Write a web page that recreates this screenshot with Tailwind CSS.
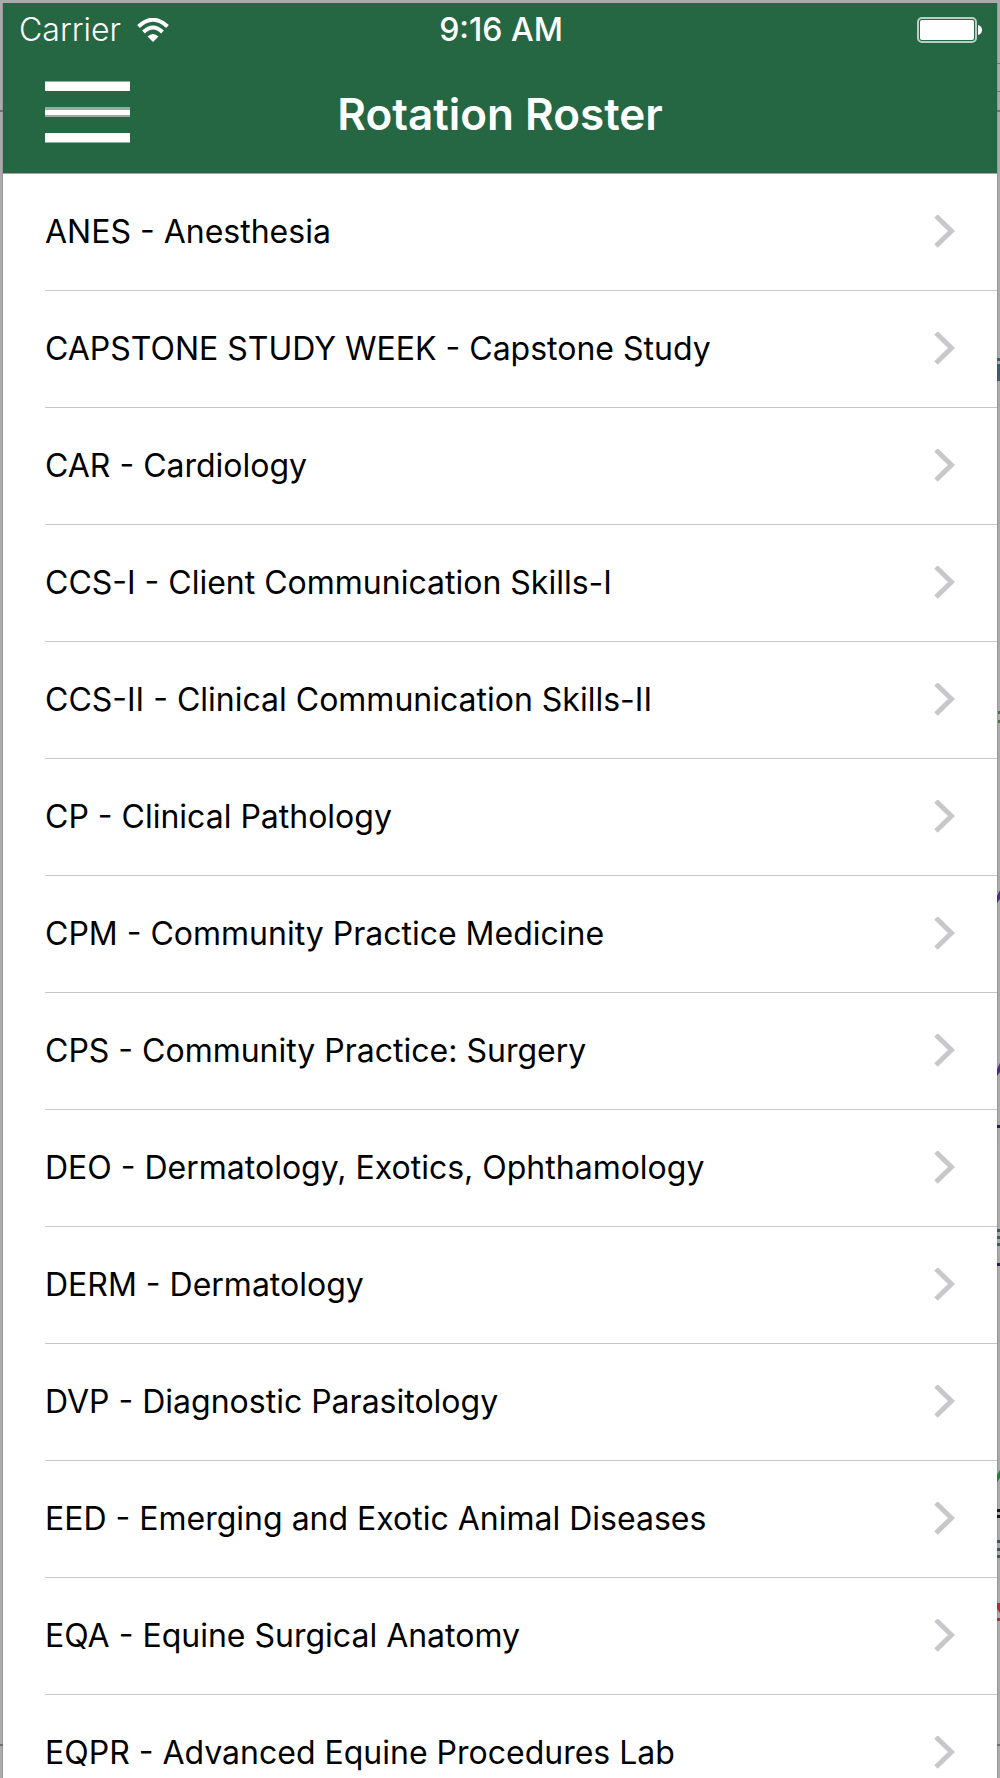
<!DOCTYPE html>
<html lang="en">
  <head>
    <meta charset="UTF-8" />
    <meta name="viewport" content="width=device-width, initial-scale=1.0" />
    <title>Rotation Roster</title>
    <script src="https://cdn.jsdelivr.net/npm/@tailwindcss/browser@4"></script>
  </head>
  <body class="font-['Inter','Noto_Sans',sans-serif] text-black antialiased">
    <div class="relative flex h-screen flex-col overflow-hidden bg-[#ababab] px-[3px] pt-[3px]">
      <header class="shrink-0 border-b border-[#a3a8a5] bg-[#256643] text-white">
        <div class="grid h-[54px] grid-cols-3 items-center pr-[14px] pl-4 text-[32px]">
          <div class="flex items-center gap-4">
            <span class="font-light">Carrier</span>
            <!-- Wi-Fi -->
            <svg class="h-6 w-8" viewBox="0 0 32 24" fill="none" aria-hidden="true">
              <path d="M1.500 8.500 Q16 -5 30.500 8.500" stroke="#fff" stroke-width="4" />
              <path d="M6.500 14 Q16 5 25.500 14" stroke="#fff" stroke-width="4" />
              <path d="M16 24 L10.500 18.500 Q16 13.500 21.500 18.500 Z" fill="#fff" />
            </svg>
          </div>
          <span class="text-center font-medium">9:16 AM</span>
          <!-- Battery -->
          <svg class="h-[26px] w-[66px] justify-self-end" viewBox="0 0 66 26" aria-hidden="true">
            <rect x="1" y="1" width="58" height="24" rx="4" fill="none" stroke="#b9cfc3" stroke-width="2" />
            <rect x="3" y="3" width="54" height="20" rx="2" fill="#fff" />
            <path d="M61 8 Q65 9 65 13 Q65 17 61 18 Z" fill="#fff" />
          </svg>
        </div>
        <div class="grid h-[116px] grid-cols-[85px_1fr_85px] items-center px-[42px] pb-[6px]">
          <button type="button" aria-label="Menu">
            <svg class="h-[62px] w-[85px]" viewBox="0 0 85 62" aria-hidden="true">
              <path d="M0 0h85v10H0zM0 26h85v10H0zM0 52h85v10H0z" fill="#8fb19f" />
              <path d="M0 1h85v9H0zM0 29h85v5H0zM0 52h85v9H0z" fill="#fff" />
            </svg>
          </button>
          <h1 class="pt-1 text-center text-[44px] font-semibold">Rotation Roster</h1>
        </div>
      </header>

      <main class="flex-1 overflow-hidden bg-white">
        <ul id="roster" class="pl-[42px] text-[32px]"></ul>
      </main>

      <!-- Window behind the simulator, showing at its edges -->
      <svg class="absolute top-[3px] right-0 h-[1775px] w-[3px]" viewBox="0 0 3 1775" aria-hidden="true">
        <path d="M0 0h1v1775H0z" fill="#989898" />
        <path d="M0 60h3v1H0zM0 88h3v1H0zM0 107h3v2H0zM0 1741h3v2H0z" fill="#707070" />
        <path d="M0 355h3v3H0zM0 361h3v17H0z" fill="#365f70" />
        <path d="M1 708h2v3H1zM1 717h2v3H1z" fill="#52704c" />
        <path d="M3 887v9l-3 4v-7zM3 1060v9l-3 4v-7z" fill="#4d2c80" />
        <path d="M0 1122h3v3H0zM0 1260h3v3H0z" fill="#2a1c4d" />
        <path d="M0 1125h1v13H0z" fill="#8199aa" />
        <path d="M0 1226h3v3H0zM0 1233h3v3H0zM0 1240h3v3H0z" fill="#3b5c5a" />
        <path d="M3 1467v8l-3 4v-7z" fill="#18813b" />
        <path d="M0 1506h3v3H0zM0 1512h3v3H0z" fill="#151515" />
        <path d="M0 1537h3v3H0zM0 1545h3v3H0zM0 1552h3v3H0z" fill="#40545c" />
        <path d="M0 1600h3v10l-3-4zM0 1615h3v3H0z" fill="#b12c35" />
      </svg>
      <svg class="absolute top-[3px] left-0 h-[1775px] w-[3px]" viewBox="0 0 3 1775" aria-hidden="true">
        <path d="M2 0h1v1775H2z" fill="#989898" />
        <path d="M0 107h3v2H0zM0 1741h3v2H0z" fill="#707070" />
      </svg>
    </div>

    <template id="row">
      <li>
        <a href="#" class="flex h-[117px] items-center justify-between border-b border-[#c8c7cc] pr-[42px] pb-px">
          <span class="whitespace-nowrap"></span>
          <svg class="h-[34px] w-[21px] shrink-0" viewBox="0 0 21 34" fill="none" aria-hidden="true">
            <path d="M2 1 L17.500 16 L2 31" stroke="#c7c7cc" stroke-width="5" />
          </svg>
        </a>
      </li>
    </template>

    <script>
      const rotations = [
        "ANES - Anesthesia",
        "CAPSTONE STUDY WEEK - Capstone Study",
        "CAR - Cardiology",
        "CCS-I - Client Communication Skills-I",
        "CCS-II - Clinical Communication Skills-II",
        "CP - Clinical Pathology",
        "CPM - Community Practice Medicine",
        "CPS - Community Practice: Surgery",
        "DEO - Dermatology, Exotics, Ophthamology",
        "DERM - Dermatology",
        "DVP - Diagnostic Parasitology",
        "EED - Emerging and Exotic Animal Diseases",
        "EQA - Equine Surgical Anatomy",
        "EQPR - Advanced Equine Procedures Lab",
      ];

      const roster = document.getElementById("roster");
      const row = document.getElementById("row");

      rotations.forEach((name) => {
        const item = row.content.cloneNode(true);
        item.querySelector("span").textContent = name;
        roster.appendChild(item);
      });
    </script>
  </body>
</html>
